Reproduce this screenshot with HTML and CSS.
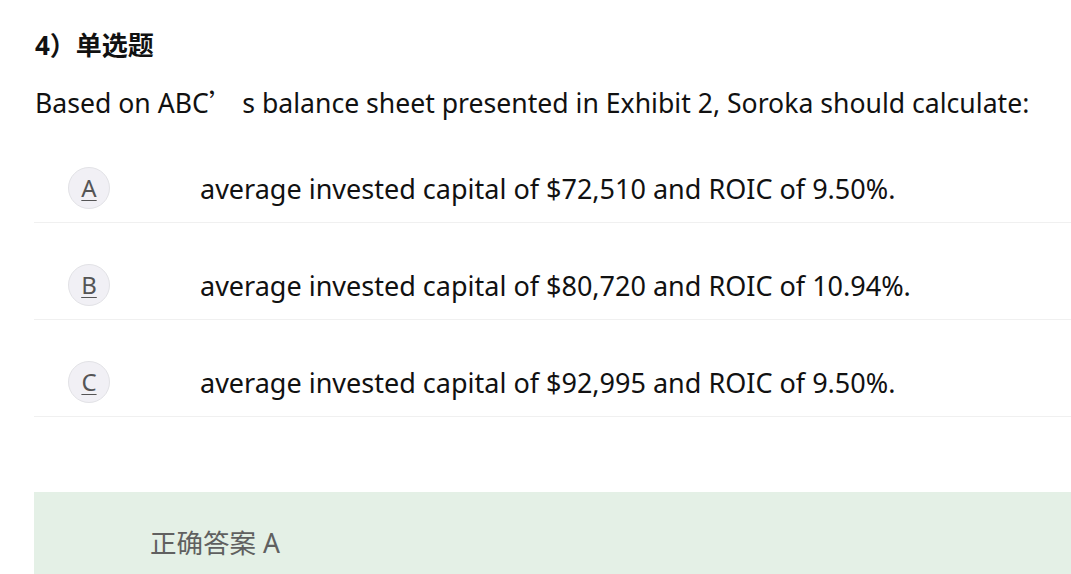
FILE: index.html
```html
<!DOCTYPE html>
<html lang="zh-CN">
<head>
<meta charset="utf-8">
<link rel="stylesheet" href="styles.css">
</head>
<body>
<div class="page">
  <h2 class="qtitle">4）单选题</h2>
  <p class="qtext">Based on ABC<span class="cjk">’</span> s balance sheet presented in Exhibit 2, Soroka should calculate:</p>
  <ul class="options">
    <li class="option"><span class="badge"><u>A</u></span><span class="otext">average invested capital of $72,510 and ROIC of 9.50%.</span></li>
    <li class="option"><span class="badge"><u>B</u></span><span class="otext">average invested capital of $80,720 and ROIC of 10.94%.</span></li>
    <li class="option"><span class="badge"><u>C</u></span><span class="otext">average invested capital of $92,995 and ROIC of 9.50%.</span></li>
  </ul>
  <div class="answer">正确答案 A</div>
</div>
</body>
</html>
```
FILE: styles.css
```css
html, body {
  margin: 0;
  padding: 0;
  background: #ffffff;
  overflow: hidden;
}
body {
  font-family: "Noto Sans", "Noto Sans CJK SC", sans-serif;
  color: #111;
}
.page {
  padding: 27px 0 0 34px;
  width: 1100px;
}
.qtitle {
  margin: 0;
  font-size: 26px;
  font-weight: 700;
  line-height: 36px;
  padding-left: 1px;
  font-family: "Noto Sans", "Noto Sans CJK SC", sans-serif;
}
.qtext {
  margin: 22px 0 0 0;
  font-size: 26.6px;
  line-height: 34px;
  padding-left: 1px;
}
.cjk {
  font-family: "Noto Sans CJK SC", sans-serif;
}
.options {
  list-style: none;
  margin: 6px 0 0 0;
  padding: 0;
}
.option {
  display: flex;
  align-items: center;
  padding: 41px 0 13px 34px;
  border-bottom: 1px solid #f0f0f0;
}
.badge {
  width: 40px;
  height: 40px;
  border: 1px solid #e2e2e6;
  border-radius: 50%;
  background: #f1f0f5;
  display: flex;
  align-items: center;
  justify-content: center;
  color: #555;
  font-size: 24px;
  line-height: 28px;
  flex: none;
}
.badge u {
  text-decoration-thickness: 1px;
  text-underline-offset: 3px;
}
.otext {
  margin-left: 90px;
  font-size: 27px;
  line-height: 34px;
  padding-top: 2px;
}
.answer {
  margin-top: 75px;
  background: #e4f0e6;
  height: 100px;
  padding: 33px 0 0 116px;
  font-size: 26.5px;
  line-height: 36px;
  color: #606060;
  box-sizing: border-box;
}
```
